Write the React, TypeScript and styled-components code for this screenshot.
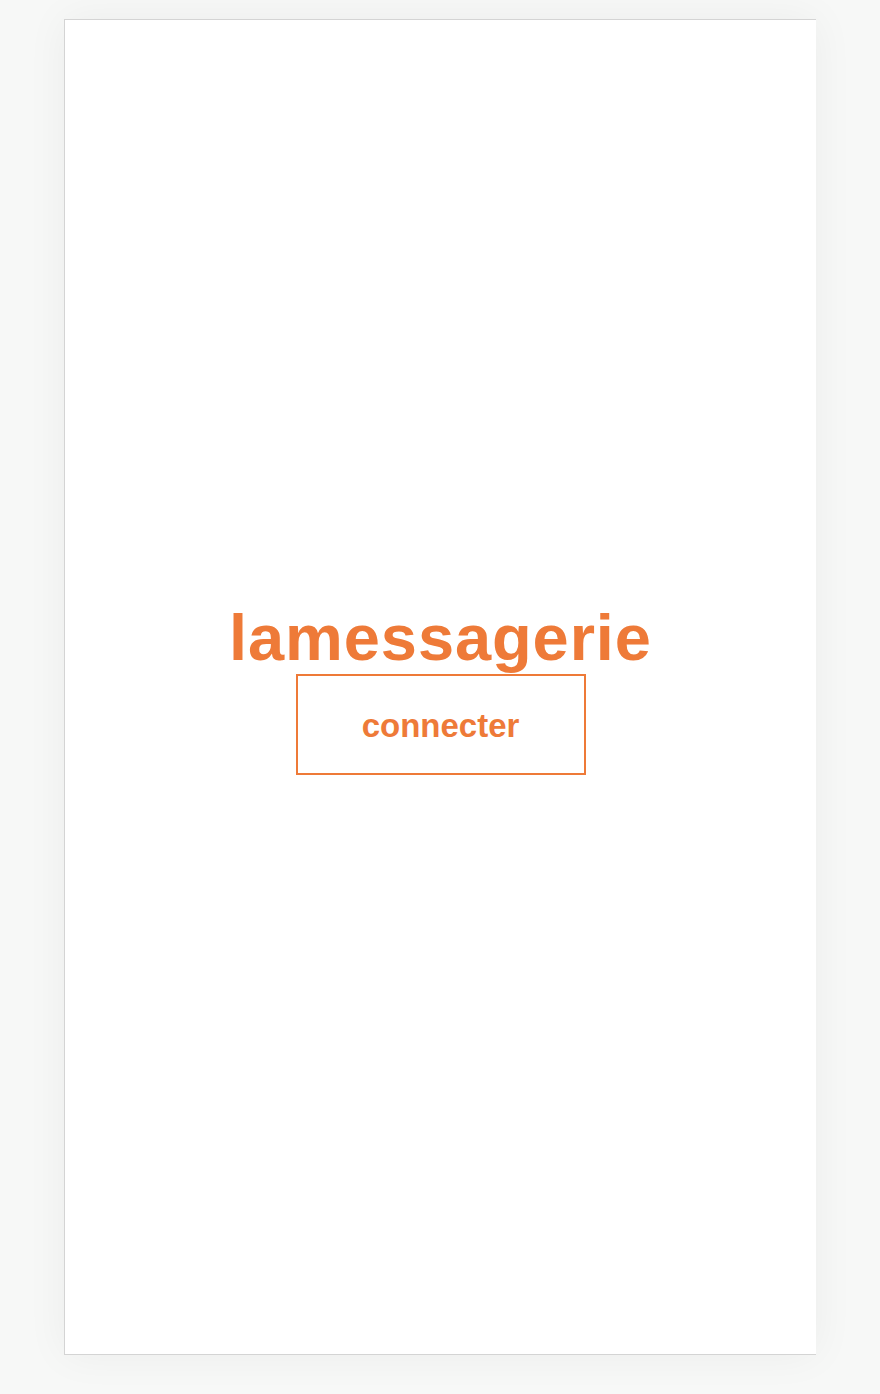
import React from "react";
import styled, { createGlobalStyle } from "styled-components";

const Global = createGlobalStyle`
  html, body { margin: 0; padding: 0; }
  body { background: #f7f8f7; font-family: "Liberation Sans", Arial, sans-serif; }
`;

const Page = styled.div`
  width: 880px;
  height: 1394px;
  box-sizing: border-box;
  padding: 19px 64px 39px 64px;
  display: flex;
`;

const Card = styled.main`
  flex: 1;
  background: #ffffff;
  border-left: 1px solid #d4d4d4;
  border-top: 1px solid #d4d4d4;
  border-bottom: 1px solid #d4d4d4;
  box-shadow: 0 0 40px rgba(0, 0, 0, 0.05);
  display: flex;
  flex-direction: column;
  align-items: center;
  justify-content: center;
  padding-top: 3px;
`;

const Title = styled.h1`
  margin: 0;
  color: #ee7a38;
  font-family: "Liberation Sans", Arial, sans-serif;
  font-weight: 700;
  font-size: 65px;
  line-height: 72px;
  letter-spacing: 0.9px;
`;

const ConnectButton = styled.button`
  width: 290px;
  height: 101px;
  box-sizing: border-box;
  background: #ffffff;
  border: 2px solid #ee7a38;
  color: #ee7a38;
  font-family: "Liberation Sans", Arial, sans-serif;
  font-weight: 700;
  font-size: 33px;
  cursor: pointer;
  padding: 3px 0 0 0;
`;

export default function App() {
  return (
    <>
      <Global />
      <Page>
        <Card>
          <Title>lamessagerie</Title>
          <ConnectButton>connecter</ConnectButton>
        </Card>
      </Page>
    </>
  );
}
